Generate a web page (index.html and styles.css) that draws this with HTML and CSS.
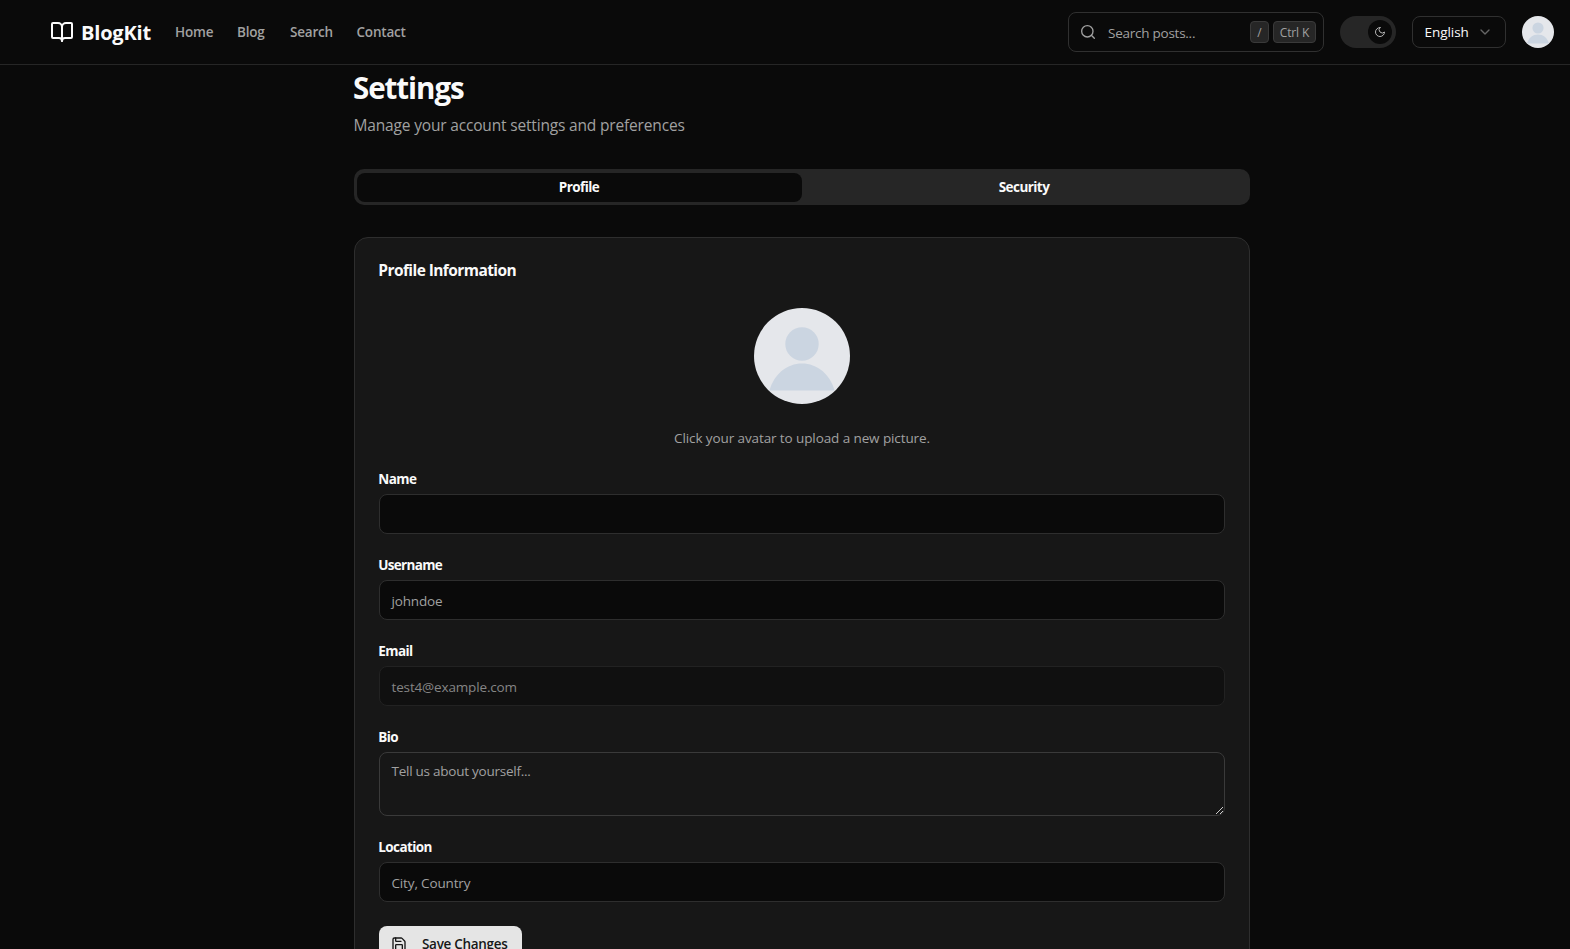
FILE: index.html
```html
<!DOCTYPE html>
<html lang="en">
<head>
<meta charset="utf-8">
<title>Settings - BlogKit</title>
<link rel="stylesheet" href="styles.css">
</head>
<body>
<header class="header">
  <a class="logo"><svg class="icon" width="24" height="24" viewBox="0 0 24 24"><path d="M12 7v14"/><path d="M3 18a1 1 0 0 1-1-1V4a1 1 0 0 1 1-1h5a4 4 0 0 1 4 4 4 4 0 0 1 4-4h5a1 1 0 0 1 1 1v13a1 1 0 0 1-1 1h-6a3 3 0 0 0-3 3 3 3 0 0 0-3-3z"/></svg><span class="brand">BlogKit</span></a>
  <nav class="nav"><a class="home">Home</a><a class="blog">Blog</a><a class="find">Search</a><a class="contact">Contact</a></nav>
  <div class="actions">
    <div class="search">
      <svg class="icon" width="16" height="16" viewBox="0 0 24 24"><circle cx="11" cy="11" r="8.5"/><path d="m21.5 21.5-4.5-4.5"/></svg>
      <span class="search-text">Search posts...</span>
      <kbd class="key slash">/</kbd><kbd class="key ctrl">Ctrl K</kbd>
    </div>
    <div class="toggle"><span class="thumb"><svg class="icon" width="12" height="12" viewBox="0 0 24 24"><path d="M12 3a6 6 0 0 0 9 9 9 9 0 1 1-9-9Z"/></svg></span></div>
    <div class="lang"><span>English</span><svg class="icon" width="16" height="16" viewBox="0 0 24 24"><path d="m6 9 6 6 6-6"/></svg></div>
    <svg class="avatar-small" width="32" height="32" viewBox="0 0 96 96"><circle cx="48" cy="48" r="48" fill="#e5e7eb"/><circle cx="48" cy="36" r="16.7" fill="#cbd5e1"/><path d="M15 82.5C20 65 33 55.500 48 55.500S76 65 81 82.500Z" fill="#cbd5e1"/></svg>
  </div>
</header>
<main class="main">
  <h1 class="title">Settings</h1>
  <p class="subtitle">Manage your account settings and preferences</p>
  <div class="tabs"><div class="tab active">Profile</div><div class="tab">Security</div></div>
  <section class="card">
    <h2 class="card-title">Profile Information</h2>
    <div class="upload">
      <svg width="96" height="96" viewBox="0 0 96 96"><circle cx="48" cy="48" r="48" fill="#e5e7eb"/><circle cx="48" cy="36" r="16.7" fill="#cbd5e1"/><path d="M15.500 82.500C20 66 33 55.500 48 55.500S76 66 80.500 82.500Z" fill="#cbd5e1"/></svg>
      <p class="hint">Click your avatar to upload a new picture.</p>
    </div>
    <div class="field"><label class="label">Name</label><div class="input"></div></div>
    <div class="field"><label class="label username">Username</label><div class="input"><span>johndoe</span></div></div>
    <div class="field"><label class="label">Email</label><div class="input disabled"><span>test4@example.com</span></div></div>
    <div class="field"><label class="label">Bio</label><div class="input textarea"><span>Tell us about yourself...</span><svg class="grip" width="9" height="9" viewBox="0 0 9 9"><path d="M1 8 8 1M5 8l3-3"/></svg></div></div>
    <div class="field"><label class="label">Location</label><div class="input"><span>City, Country</span></div></div>
    <button class="save"><svg class="icon" width="16" height="16" viewBox="0 0 24 24"><path d="M15.200 3a2 2 0 0 1 1.400.6l3.800 3.800a2 2 0 0 1 .6 1.400V19a2 2 0 0 1-2 2H5a2 2 0 0 1-2-2V5a2 2 0 0 1 2-2z"/><path d="M17 21v-7a1 1 0 0 0-1-1H8a1 1 0 0 0-1 1v7"/><path d="M7 3v4a1 1 0 0 0 1 1h7"/></svg><span>Save Changes</span></button>
  </section>
</main>
</body>
</html>
```
FILE: styles.css
```css
* { box-sizing: border-box; }
body { margin: 0; height: 949px; overflow: hidden; background: #0a0a0a; color: #fafafa; font: 13.5px/20px "Open Sans", "Noto Sans", sans-serif; white-space: nowrap; }
h1, h2, p { margin: 0; }
.icon { fill: none; stroke: currentColor; stroke-width: 2; stroke-linecap: round; stroke-linejoin: round; flex: none; }
.header { height: 65px; border-bottom: 1px solid #262626; display: flex; align-items: center; padding: 0 16px 0 50px; }
.logo { display: flex; align-items: center; gap: 7px; width: 125px; }
.brand { font-size: 20px; font-weight: 700; line-height: 28px; letter-spacing: -0.2px; padding-top: 2px; }
.nav { display: flex; font-weight: 600; color: #a1a1a1; letter-spacing: -0.2px; }
.home { width: 62px; }
.blog { width: 53px; }
.find { width: 66.5px; }
.actions { display: flex; align-items: center; gap: 16px; margin-left: auto; }
.search { display: flex; align-items: center; width: 256px; height: 40px; padding: 0 7px 0 11px; border: 1px solid #303030; border-radius: 8px; color: #a1a1a1; }
.search-text { margin-left: 12px; flex: 1; letter-spacing: -0.25px; padding-top: 1px; }
.key { height: 22px; border: 1px solid #3a3a3a; border-radius: 4px; background: #262626; font: 12px/21px "Open Sans", sans-serif; text-align: center; letter-spacing: -0.15px; }
.slash { width: 19px; margin-right: 4px; }
.ctrl { width: 43px; }
.toggle { width: 56px; height: 32px; border-radius: 16px; background: #262626; padding: 4px; display: flex; justify-content: flex-end; }
.thumb { width: 24px; height: 24px; border-radius: 50%; background: #0a0a0a; color: #b5b5b5; display: flex; align-items: center; justify-content: center; }
.lang { width: 94px; height: 32px; border: 1px solid #303030; border-radius: 8px; display: flex; align-items: center; justify-content: space-between; padding: 0 12px 0 11.5px; font-weight: 500; letter-spacing: -0.05px; }
.lang .icon { color: #666; }
.main { width: 896px; margin-left: 354px; }
.title { font-size: 29.5px; line-height: 36px; font-weight: 700; letter-spacing: -1.05px; padding-top: 5px; height: 48px; margin-left: -1px; }
.subtitle { font-size: 15.5px; line-height: 24px; color: #a1a1a1; letter-spacing: -0.17px; margin-left: -0.5px; }
.tabs { display: grid; grid-template-columns: 445px 445px; height: 36px; margin-top: 32px; padding: 4px 3px 3px; border-radius: 10px; background: #262626; font-weight: 700; letter-spacing: -0.55px; }
.tab { border-radius: 8px; text-align: center; line-height: 29px; padding-right: 1px; }
.active { background: #0a0a0a; }
.card { height: 760px; margin-top: 32px; border: 1px solid #2e2e2e; border-radius: 14px; background: #171717; padding: 20px 24px; }
.card-title { font-size: 15.5px; line-height: 25px; height: 24px; font-weight: 700; letter-spacing: -0.58px; margin-left: -0.7px; }
.upload { display: flex; flex-direction: column; align-items: center; margin: 26px 0 21px; }
.hint { margin-top: 24px; color: #a1a1a1; letter-spacing: -0.1px; }
.field { margin-bottom: 21px; }
.field:last-of-type { margin-bottom: 24px; }
.label { display: block; height: 25px; line-height: 21px; font-weight: 700; letter-spacing: -0.6px; margin-left: -0.7px; }
.username { letter-spacing: -0.7px; }
.input { height: 40px; border: 1px solid #2e2e2e; border-radius: 8px; background: #0a0a0a; color: #a1a1a1; padding: 10px 11.5px; letter-spacing: -0.15px; }
.disabled { background: #101010; border-color: #222; color: #858585; }
.textarea { position: relative; height: 64px; background: #171717; border-color: #3a3a3a; padding-top: 8px; letter-spacing: -0.25px; }
.grip { position: absolute; right: 0; bottom: 0; fill: none; stroke: #ccc; stroke-width: 1; }
.save { display: flex; align-items: center; width: 143px; height: 36px; padding: 0 12px; border: 0; border-radius: 8px; background: #e5e5e5; color: #171717; font: 600 13.5px/20px "Open Sans", sans-serif; gap: 15px; letter-spacing: -0.3px; }
```
